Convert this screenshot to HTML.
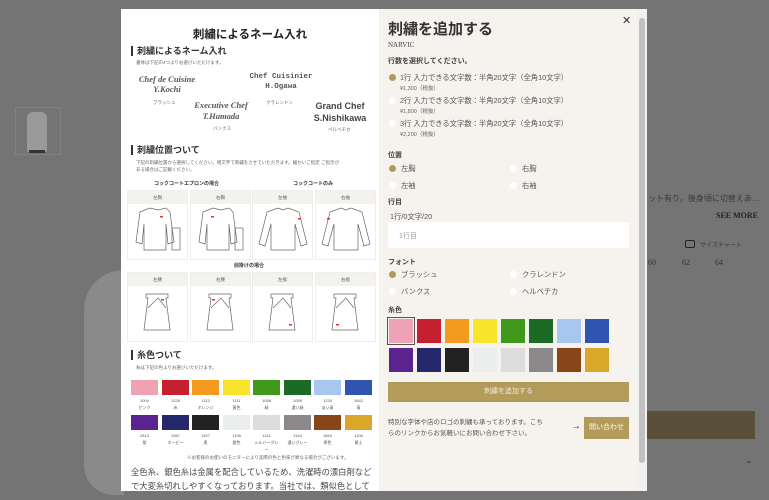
<!DOCTYPE html><html><head><meta charset="utf-8"><style>
*{margin:0;padding:0;box-sizing:border-box}
body{width:769px;height:500px;overflow:hidden;background:#747474;font-family:"Liberation Sans","Noto Sans CJK JP",sans-serif;position:relative;color:#333}
.a{position:absolute}
.modal{left:121px;top:9px;width:526px;height:482px;background:#fff}
.left{left:121px;top:9px;width:258px;height:482px;background:#fff;overflow:hidden}
.right{left:379px;top:9px;width:258px;height:482px;background:#f6f3ee}
.sb{left:637px;top:9px;width:10px;height:482px;background:#f1f1f1}
.thumb{left:639px;top:18px;width:6px;height:445px;background:#c1c1c1;border-radius:3px}
.h{font-size:9px;font-weight:bold;border-left:2px solid #333;padding-left:4px;line-height:10px}
.sm{font-size:4.5px;color:#666;white-space:nowrap}
.cell{position:absolute;width:61px;border:1px solid #eee}
.cell .hd{height:13px;background:#f4f2ee;font-size:4.5px;color:#666;text-align:center;line-height:13px}
.sw{position:absolute;width:27px;height:15px}
.lab{position:absolute;width:27px;text-align:center;font-size:4px;color:#555;line-height:7px}
.r{font-size:7.3px;color:#555;white-space:nowrap}
.dot{position:absolute;width:7px;height:7px;border-radius:50%;background:#fff}
.dot.on{background:#b09a5b}
.rs{position:absolute;width:24px;height:24px}
</style></head><body>
<!-- background page -->
<div class="a" style="left:15px;top:107px;width:46px;height:48px;border:1px solid #808080"></div>
<div class="a" style="left:27px;top:112px;width:20px;height:40px;background:#9a9a9a;border-radius:6px 6px 2px 2px"></div>
<div class="a" style="left:29px;top:150px;width:16px;height:3px;background:#333"></div>
<div class="a" style="left:84px;top:270px;width:40px;height:225px;background:#8a8a8a;border-radius:40px 0 0 30px"></div>
<div class="a" style="left:648px;top:193px;font-size:8px;color:#3a3a3a;white-space:nowrap">ット有り。後身頃に切替えあ…</div>
<div class="a" style="left:716px;top:211px;font-size:8px;font-weight:bold;color:#222;font-family:'Liberation Serif',serif">SEE MORE</div>
<div class="a" style="left:685px;top:240px;width:10px;height:8px;border:1.5px solid #222;border-radius:2px"></div>
<div class="a" style="left:700px;top:240px;font-size:6px;color:#3a3a3a">サイズチャート</div>
<div class="a" style="left:648px;top:258px;font-size:8px;color:#333;font-family:'Liberation Serif',serif">60</div>
<div class="a" style="left:682px;top:258px;font-size:8px;color:#333;font-family:'Liberation Serif',serif">62</div>
<div class="a" style="left:715px;top:258px;font-size:8px;color:#333;font-family:'Liberation Serif',serif">64</div>
<div class="a" style="left:647px;top:411px;width:108px;height:28px;background:#5a4f38"></div>
<div class="a" style="left:745px;top:455px;font-size:9px;color:#333">⌄</div>

<div class="a modal"></div>
<div class="a left">
 <div class="a" style="left:0;top:17px;width:258px;text-align:center;font-size:11.5px;font-weight:bold;color:#222">刺繍によるネーム入れ</div>
 <div class="a h" style="left:10px;top:37px">刺繍によるネーム入れ</div>
 <div class="a sm" style="left:15px;top:51px">書体は下記の4つよりお選びいただけます。</div>
 <div class="a" style="left:8px;top:65px;font-family:'Liberation Serif',serif;font-style:italic;font-weight:bold;font-size:8.5px;color:#555;line-height:10px;text-align:center;width:76px;white-space:nowrap">Chef de Cuisine<br>Y.Kochi</div>
 <div class="a sm" style="left:32px;top:91px">ブラッシュ</div>
 <div class="a" style="left:122px;top:63px;font-family:'Liberation Mono',monospace;font-weight:bold;font-size:7.5px;color:#555;line-height:10px;text-align:center;width:76px;white-space:nowrap">Chef Cuisinier<br>H.Ogawa</div>
 <div class="a sm" style="left:145px;top:91px">クラレンドン</div>
 <div class="a" style="left:62px;top:91px;font-family:'Liberation Serif',serif;font-style:italic;font-weight:bold;font-size:8.5px;color:#555;line-height:11px;text-align:center;width:76px;white-space:nowrap">Executive Chef<br>T.Hamada</div>
 <div class="a sm" style="left:92px;top:117px">バンクス</div>
 <div class="a" style="left:184px;top:91px;font-weight:bold;font-size:9px;color:#444;line-height:12px;text-align:center;width:70px;white-space:nowrap">Grand Chef<br>S.Nishikawa</div>
 <div class="a sm" style="left:207px;top:118px">ベルベチカ</div>
 <div class="a h" style="left:10px;top:136px">刺繍位置ついて</div>
 <div class="a sm" style="left:15px;top:150px;line-height:7px">下記の刺繍位置から選択してください。増文字で刺繍をさせていただきます。細かいご指定 ご指示が<br>ある場合はご記載ください。</div>
 <div class="a" style="left:33px;top:171px;font-size:5px;font-weight:bold;color:#333">コックコートエプロンの場合</div>
 <div class="a" style="left:172px;top:171px;font-size:5px;font-weight:bold;color:#333">コックコートのみ</div>
 <div class="cell" style="left:6px;top:181px"><div class="hd">左胸</div><svg width="59" height="50"><path d="M12 8 L22 4 L30 6 L38 4 L42 8 L46 38 L40 40 L38 20 L38 46 L16 46 L16 20 L14 40 L8 38 Z" fill="none" stroke="#666" stroke-width=".7"/><rect x="44" y="24" width="8" height="22" fill="none" stroke="#666" stroke-width=".7"/><rect x="32" y="12" width="3" height="1.5" fill="#d33"/></svg></div>
 <div class="cell" style="left:69px;top:181px"><div class="hd">右胸</div><svg width="59" height="50"><path d="M12 8 L22 4 L30 6 L38 4 L42 8 L46 38 L40 40 L38 20 L38 46 L16 46 L16 20 L14 40 L8 38 Z" fill="none" stroke="#666" stroke-width=".7"/><rect x="44" y="24" width="8" height="22" fill="none" stroke="#666" stroke-width=".7"/><rect x="20" y="12" width="3" height="1.5" fill="#d33"/></svg></div>
 <div class="cell" style="left:131px;top:181px"><div class="hd">左袖</div><svg width="59" height="50"><path d="M14 8 L25 4 L30 6 L35 4 L46 8 L54 40 L48 42 L42 20 L42 46 L18 46 L18 20 L12 42 L6 40 Z" fill="none" stroke="#666" stroke-width=".7"/><rect x="45" y="14" width="3" height="1.5" fill="#d33"/></svg></div>
 <div class="cell" style="left:194px;top:181px"><div class="hd">右袖</div><svg width="59" height="50"><path d="M14 8 L25 4 L30 6 L35 4 L46 8 L54 40 L48 42 L42 20 L42 46 L18 46 L18 20 L12 42 L6 40 Z" fill="none" stroke="#666" stroke-width=".7"/><rect x="11" y="14" width="3" height="1.5" fill="#d33"/></svg></div>
 <div class="a" style="left:113px;top:253px;font-size:5px;font-weight:bold;color:#333">前掛けの場合</div>
 <div class="cell" style="left:6px;top:263px"><div class="hd">左腰</div><svg width="59" height="50"><path d="M18 8 L40 8 L40 12 L38 12 L42 44 L16 44 L20 12 L18 12 Z M20 22 L30 12 L38 22" fill="none" stroke="#666" stroke-width=".7"/><rect x="33" y="13" width="3" height="1.5" fill="#d33"/></svg></div>
 <div class="cell" style="left:69px;top:263px"><div class="hd">右腰</div><svg width="59" height="50"><path d="M18 8 L40 8 L40 12 L38 12 L42 44 L16 44 L20 12 L18 12 Z M20 22 L30 12 L38 22" fill="none" stroke="#666" stroke-width=".7"/><rect x="21" y="13" width="3" height="1.5" fill="#d33"/></svg></div>
 <div class="cell" style="left:131px;top:263px"><div class="hd">左裾</div><svg width="59" height="50"><path d="M18 8 L40 8 L40 12 L38 12 L42 44 L16 44 L20 12 L18 12 Z M20 22 L30 12 L38 22" fill="none" stroke="#666" stroke-width=".7"/><rect x="36" y="38" width="3" height="1.5" fill="#d33"/></svg></div>
 <div class="cell" style="left:194px;top:263px"><div class="hd">右裾</div><svg width="59" height="50"><path d="M18 8 L40 8 L40 12 L38 12 L42 44 L16 44 L20 12 L18 12 Z M20 22 L30 12 L38 22" fill="none" stroke="#666" stroke-width=".7"/><rect x="20" y="38" width="3" height="1.5" fill="#d33"/></svg></div>
 <div class="a h" style="left:10px;top:341px">糸色ついて</div>
 <div class="a sm" style="left:15px;top:356px">糸は下記の色よりお選びいただけます。</div>
 <div class="sw" style="left:10px;top:371px;background:#eda3b4"></div><div class="lab" style="left:10px;top:388px">1004<br>ピンク</div>
 <div class="sw" style="left:41px;top:371px;background:#c4202f"></div><div class="lab" style="left:41px;top:388px">1226<br>赤</div>
 <div class="sw" style="left:71px;top:371px;background:#f39a1f"></div><div class="lab" style="left:71px;top:388px">1113<br>オレンジ</div>
 <div class="sw" style="left:102px;top:371px;background:#f8e52b"></div><div class="lab" style="left:102px;top:388px">1111<br>黄色</div>
 <div class="sw" style="left:132px;top:371px;background:#3f9a1b"></div><div class="lab" style="left:132px;top:388px">1058<br>緑</div>
 <div class="sw" style="left:163px;top:371px;background:#1b6a26"></div><div class="lab" style="left:163px;top:388px">1055<br>濃い緑</div>
 <div class="sw" style="left:193px;top:371px;background:#a7c6f0"></div><div class="lab" style="left:193px;top:388px">1230<br>淡い青</div>
 <div class="sw" style="left:224px;top:371px;background:#2f55b0"></div><div class="lab" style="left:224px;top:388px">1842<br>青</div>
 <div class="sw" style="left:10px;top:406px;background:#5b2390"></div><div class="lab" style="left:10px;top:423px">2813<br>紫</div>
 <div class="sw" style="left:41px;top:406px;background:#24286a"></div><div class="lab" style="left:41px;top:423px">1967<br>ネービー</div>
 <div class="sw" style="left:71px;top:406px;background:#222"></div><div class="lab" style="left:71px;top:423px">1197<br>黒</div>
 <div class="sw" style="left:102px;top:406px;background:#eceeee"></div><div class="lab" style="left:102px;top:423px">1198<br>銀色</div>
 <div class="sw" style="left:132px;top:406px;background:#dcdcdc"></div><div class="lab" style="left:132px;top:423px">1141<br>シルバーグレー</div>
 <div class="sw" style="left:163px;top:406px;background:#8a8888"></div><div class="lab" style="left:163px;top:423px">1144<br>濃いグレー</div>
 <div class="sw" style="left:193px;top:406px;background:#874518"></div><div class="lab" style="left:193px;top:423px">1864<br>茶色</div>
 <div class="sw" style="left:224px;top:406px;background:#d9a72a"></div><div class="lab" style="left:224px;top:423px">1106<br>黄土</div>
 <div class="a sm" style="left:66px;top:446px">※お客様のお使いのモニターにより実際の色と色味が異なる場合がございます。</div>
 <div class="a" style="left:10px;top:456px;width:245px;font-size:8.3px;line-height:14px;color:#444">全色糸、銀色糸は金属を配合しているため、洗濯時の漂白剤などで大変糸切れしやすくなっております。当社では、類似色として「おうど(金の代用)」「薄いグレー(銀の代用)」をお勧めしております。</div>
</div>
<div class="a right">
 <div class="a" style="left:243px;top:5px;font-size:11px;color:#333">✕</div>
 <div class="a" style="left:9px;top:12px;font-size:15px;line-height:18px;font-weight:bold;color:#333;white-space:nowrap">刺繍を追加する</div>
 <div class="a" style="left:9px;top:32px;font-size:7px;font-family:'Liberation Serif',serif;color:#444">NARVIC</div>
 <div class="a" style="left:9px;top:47px;font-size:7px;font-weight:bold;color:#444">行数を選択してください。</div>
 <div class="dot on" style="left:10px;top:65px"></div><div class="a r" style="left:21px;top:64px">1行 入力できる文字数：半角20文字（全角10文字）</div><div class="a" style="left:21px;top:75px;font-size:5.5px;color:#666">¥1,300（税抜）</div>
 <div class="dot" style="left:10px;top:88px"></div><div class="a r" style="left:21px;top:87px">2行 入力できる文字数：半角20文字（全角10文字）</div><div class="a" style="left:21px;top:98px;font-size:5.5px;color:#666">¥1,800（税抜）</div>
 <div class="dot" style="left:10px;top:111px"></div><div class="a r" style="left:21px;top:110px">3行 入力できる文字数：半角20文字（全角10文字）</div><div class="a" style="left:21px;top:121px;font-size:5.5px;color:#666">¥2,200（税抜）</div>
 <div class="a" style="left:9px;top:141px;font-size:7px;font-weight:bold;color:#444">位置</div>
 <div class="dot on" style="left:10px;top:156px"></div><div class="a r" style="left:22px;top:155px">左胸</div>
 <div class="dot" style="left:131px;top:156px"></div><div class="a r" style="left:143px;top:155px">右胸</div>
 <div class="dot" style="left:10px;top:173px"></div><div class="a r" style="left:22px;top:172px">左袖</div>
 <div class="dot" style="left:131px;top:173px"></div><div class="a r" style="left:143px;top:172px">右袖</div>
 <div class="a" style="left:9px;top:188px;font-size:7px;font-weight:bold;color:#444">行目</div>
 <div class="a r" style="left:11px;top:203px">1行/0文字/20</div>
 <div class="a" style="left:9px;top:213px;width:241px;height:26px;background:#fff"></div>
 <div class="a" style="left:20px;top:222px;font-size:7px;color:#999">1行目</div>
 <div class="a" style="left:9px;top:248px;font-size:7px;font-weight:bold;color:#444">フォント</div>
 <div class="dot on" style="left:10px;top:262px"></div><div class="a r" style="left:22px;top:261px">ブラッシュ</div>
 <div class="dot" style="left:131px;top:262px"></div><div class="a r" style="left:143px;top:261px">クラレンドン</div>
 <div class="dot" style="left:10px;top:279px"></div><div class="a r" style="left:22px;top:278px">バンクス</div>
 <div class="dot" style="left:131px;top:279px"></div><div class="a r" style="left:143px;top:278px">ヘルベチカ</div>
 <div class="a" style="left:9px;top:296px;font-size:7px;font-weight:bold;color:#444">糸色</div>
 <div class="rs" style="left:10px;top:310px;background:#eda3b4;outline:1.5px solid #555;outline-offset:1px"></div>
 <div class="rs" style="left:38px;top:310px;background:#c4202f"></div>
 <div class="rs" style="left:66px;top:310px;background:#f39a1f"></div>
 <div class="rs" style="left:94px;top:310px;background:#f8e52b"></div>
 <div class="rs" style="left:122px;top:310px;background:#3f9a1b"></div>
 <div class="rs" style="left:150px;top:310px;background:#1b6a26"></div>
 <div class="rs" style="left:178px;top:310px;background:#a7c6f0"></div>
 <div class="rs" style="left:206px;top:310px;background:#2f55b0"></div>
 <div class="rs" style="left:10px;top:339px;background:#5b2390"></div>
 <div class="rs" style="left:38px;top:339px;background:#24286a"></div>
 <div class="rs" style="left:66px;top:339px;background:#222"></div>
 <div class="rs" style="left:94px;top:339px;background:#eceeee"></div>
 <div class="rs" style="left:122px;top:339px;background:#dcdcdc"></div>
 <div class="rs" style="left:150px;top:339px;background:#8a8888"></div>
 <div class="rs" style="left:178px;top:339px;background:#874518"></div>
 <div class="rs" style="left:206px;top:339px;background:#d9a72a"></div>
 <div class="a" style="left:9px;top:373px;width:241px;height:20px;background:#b39b5a;color:#f3ecd9;font-size:7px;text-align:center;line-height:20px">刺繍を追加する</div>
 <div class="a" style="left:9px;top:408px;width:160px;font-size:6.5px;line-height:11px;color:#555">特別な字体や店のロゴの刺繍も承っております。こちらのリンクからお気軽いにお問い合わせ下さい。</div>
 <div class="a" style="left:192px;top:412px;font-size:10px;color:#333">→</div>
 <div class="a" style="left:205px;top:408px;width:45px;height:22px;background:#b39b5a;color:#fff;font-size:7px;text-align:center;line-height:22px">問い合わせ</div>
</div>
<div class="a sb"></div>
<div class="a thumb"></div>
</body></html>
